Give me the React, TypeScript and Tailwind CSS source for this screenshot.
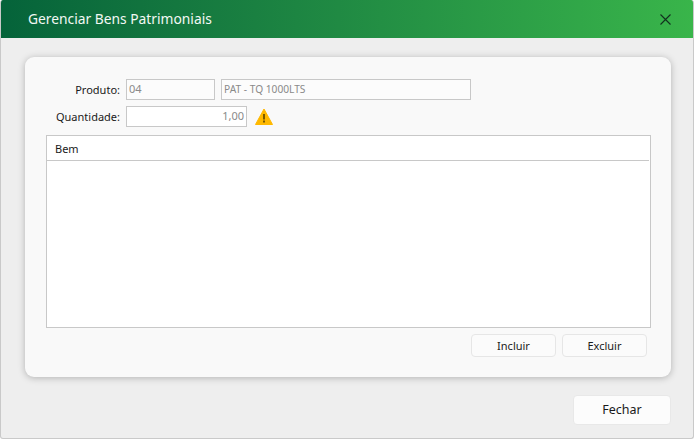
export default function App() {
  return (
    <div className="flex h-[439px] w-[694px] flex-col overflow-hidden rounded-[3px] border-x border-b border-[#c9c9c9] bg-[#eeeeee] font-['Noto_Sans','Open_Sans',sans-serif]">
      <header className="-mx-px flex h-[38px] shrink-0 items-center justify-between bg-gradient-to-r from-[#05633a] to-[#39b54a] pl-[28px] pr-[23px]">
        <h1 className="text-[13.8px] font-normal leading-none text-[#f2f8f4]">Gerenciar Bens Patrimoniais</h1>
        <svg width="11" height="11" viewBox="0 0 11 11" fill="none" stroke="#12301f" strokeWidth="1.1">
          <path d="M0.5 0.5 10.5 10.5M10.5 0.5 0.5 10.5" />
        </svg>
      </header>

      <main className="ml-[24px] mr-[22px] mt-[19px] flex h-[320px] flex-col rounded-[9px] bg-[#f9f9f9] pl-[21px] pr-[20px] pt-[22px] shadow-[0_1px_7px_rgba(0,0,0,0.25)]">
        <div className="flex items-center gap-[6px]">
          <label className="w-[74px] text-right text-[11px] leading-none text-[#1a1a1a]">Produto:</label>
          <div className="flex h-[21px] w-[89px] items-center border border-[#c8c8c8] bg-[#fcfcfc] px-[2px] text-[11px] text-[#8a8a8a]">04</div>
          <div className="flex h-[21px] w-[250px] items-center border border-[#c8c8c8] bg-[#fcfcfc] px-[2px] text-[10.2px] text-[#8a8a8a]">PAT - TQ 1000LTS</div>
        </div>

        <div className="mt-[6px] flex items-center gap-[6px]">
          <label className="w-[74px] whitespace-nowrap text-right text-[11px] leading-none text-[#1a1a1a]">Quantidade:</label>
          <div className="flex h-[21px] w-[121px] items-center justify-end border border-[#c8c8c8] bg-white px-[2px] text-[11px] text-[#8a8a8a]">1,00</div>
          <svg className="ml-[2px]" width="18" height="17" viewBox="0 0 18 17">
            <path d="M9 1 17.5 16.5H0.5Z" fill="#ffb900" stroke="#ffb900" strokeLinejoin="round" />
            <rect x="8" y="6" width="2" height="5.5" fill="#7a5a00" />
            <rect x="8" y="12.5" width="2" height="2" fill="#7a5a00" />
          </svg>
        </div>

        <section className="mt-[8px] flex h-[193px] w-[605px] flex-col border border-[#c8c8c8] bg-white">
          <div className="mr-[1px] flex h-[25px] shrink-0 items-center border-b border-[#c8c8c8] pl-[8px] text-[11px] leading-none text-[#1a1a1a]">Bem</div>
        </section>

        <div className="mt-[6px] flex w-[601px] justify-end gap-[6px]">
          <button className="h-[23px] w-[85px] rounded-[4px] border border-[#e6e6e6] bg-[#fbfbfb] text-[11px] leading-none text-[#1a1a1a]">Incluir</button>
          <button className="h-[23px] w-[85px] rounded-[4px] border border-[#e6e6e6] bg-[#fbfbfb] text-[11px] leading-none text-[#1a1a1a]">Excluir</button>
        </div>
      </main>

      <footer className="mr-[22px] mt-[18px] flex justify-end">
        <button className="h-[30px] w-[98px] rounded-[4px] border border-[#e8e8e8] bg-[#fcfcfc] text-[12.5px] leading-none text-[#1a1a1a]">Fechar</button>
      </footer>
    </div>
  );
}
